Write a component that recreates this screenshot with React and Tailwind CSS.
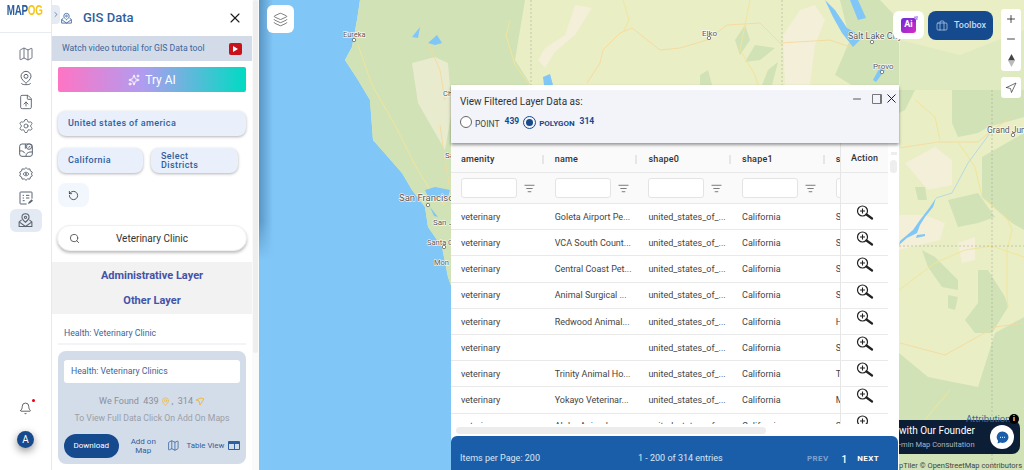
import {
  FileUp,
  Layers,
  Map as MapIcon,
  MapPin,
  Minus,
  Navigation,
  Plus,
  RotateCcw,
  Search,
  Settings,
  Sparkles,
  X,
  Bell,
  ChevronRight,
  Briefcase,
  ListFilter,
} from "lucide-react";

const rows = [
  ["Goleta Airport Pe...", "S"],
  ["VCA South Count...", "S"],
  ["Central Coast Pet...", "S"],
  ["Animal Surgical ...", "S"],
  ["Redwood Animal...", "H"],
  ["", "S"],
  ["Trinity Animal Ho...", "Tr"],
  ["Yokayo Veterinar...", "M"],
  ["Aloha Animal...", "S"],
];

const MagPlus = () => (
  <svg width="18" height="15" viewBox="0 0 18 15" fill="none" stroke="#222">
    <circle cx="6.5" cy="6" r="5" strokeWidth="1.2" />
    <path d="M6.5 3.5v5M4 6h5" strokeWidth="1.1" />
    <path d="M10.5 9.5l5.5 4" strokeWidth="2.2" strokeLinecap="round" />
  </svg>
);

const PinMail = ({ size = 20, color = "#5b6470" }) => (
  <svg width={size} height={size} viewBox="0 0 24 24" fill="none" stroke={color} strokeWidth="1.5">
    <path d="M12 2.5a5 5 0 0 1 5 5c0 3-5 7-5 7s-5-4-5-7a5 5 0 0 1 5-5z" />
    <circle cx="12" cy="7.5" r="1.6" />
    <path d="M6.5 11L3 14v6.5h18V14l-3.5-3" />
    <path d="M3 14l9 6.5L21 14" />
  </svg>
);

const PinRound = () => (
  <svg width="16" height="16" viewBox="0 0 24 24" fill="none" stroke="#5b6470" strokeWidth="1.5">
    <path d="M12 2a7.5 7.5 0 0 1 7.5 7.5c0 4-5 8-7.5 10.5-2.500-2.500-7.500-6.500-7.500-10.500A7.500 7.500 0 0 1 12 2z" />
    <circle cx="12" cy="9.500" r="3" />
    <path d="M6 19.500c-1 .5-1 2.500 6 2.500s7-2 6-2.500" />
  </svg>
);

const MapCheck = () => (
  <svg width="16" height="16" viewBox="0 0 24 24" fill="none" stroke="#5b6470" strokeWidth="1.5">
    <rect x="2.500" y="3" width="19" height="18.500" rx="3.500" />
    <path d="M2.500 13.500c4-1 6 1 8 3.500M11 3v7M12 21.500c0-5 4-7 9.500-6.500" />
    <circle cx="16.500" cy="7" r="4" fill="#fff" />
    <path d="M15 7l1.200 1.200L18.200 6" />
  </svg>
);

const GearEye = () => (
  <svg width="16" height="16" viewBox="0 0 24 24" fill="none" stroke="#5b6470" strokeWidth="1.4">
    <path d="M12 2.500l2.500 2.200 3.300-.4.800 3.200 2.900 1.700-1.300 2.800 1.300 2.800-2.900 1.700-.8 3.200-3.300-.4-2.500 2.200-2.500-2.200-3.300.4-.8-3.200-2.900-1.700 1.300-2.800-1.300-2.800 2.900-1.700.8-3.200 3.300.4z" />
    <path d="M7.500 12c2.500-3.500 6.500-3.500 9 0-2.500 3.500-6.500 3.500-9 0z" />
    <circle cx="12" cy="12" r="1" />
  </svg>
);

const ListEdit = () => (
  <svg width="16" height="16" viewBox="0 0 24 24" fill="none" stroke="#5b6470" strokeWidth="1.5">
    <path d="M13 21H4a1 1 0 0 1-1-1V4a1 1 0 0 1 1-1h16a1 1 0 0 1 1 1v9" />
    <path d="M7 8h2M12 8h5M7 12h2M12 12h5M7 16h3" />
    <path d="M15 21l1-3 4.500-4 2 2-4.500 4z" fill="#5b6470" stroke="none" />
  </svg>
);

const MapArt = () => (
  <svg className="absolute inset-0 w-full h-full" viewBox="259 0 765 470" preserveAspectRatio="none">
    <rect x="259" y="0" width="765" height="470" fill="#80c6f6" />
    {/* land */}
    <path
      d="M360 0L357 20L352 47L345 60L358 80L370 100L373 140L388 157L402 173L412 190L425 207L428 227L442 247L448 277L456 300L470 470L1024 470L1024 0Z"
      fill="#e9eec5"
    />
    <g fill="#d0e2b6">
      <path d="M360 0H525L515 60L531 85L531 300H456L448 277L442 247L428 227L425 207L412 190L402 173L388 157L373 140L370 100L358 80L345 60L352 47L357 20Z" />
      <path d="M840 0L880 0L899 20L899 90L860 90L835 75L850 40Z" />
      <path d="M900 40L960 55L1024 30V90H900Z" opacity="0.35" />
      <path d="M952 90L1024 90V117L988 127L978 133L958 137L952 123Z" />
      <path d="M899 90H915L905 110L899 113Z" />
      <path d="M982 157L1024 133V230L1012 223L982 197Z" />
      <path d="M948 200L978 193L995 217L978 223L958 227Z" />
      <path d="M915 187L925 187L927 200L918 200Z" />
      <path d="M922 250L935 257L958 280L958 290L942 287L928 267Z" />
      <path d="M978 270L988 270L1005 297L1008 307L992 333L975 333L965 320L978 303Z" />
      <path d="M899 353L928 377L978 387L995 333L1024 317V470H899Z" />
      <path d="M948 295L958 297L955 310L948 308Z" />
      <path d="M745 25L750 40L740 55L735 40ZM755 45L775 48L760 60L745 62ZM768 70L778 62L772 85L762 85ZM700 75L708 70L712 85L700 85Z" />
    </g>
    <g fill="#f4efd9">
      <path d="M575 5L592 8L575 35L555 52L545 68L538 60L545 48L565 35Z" />
      <path d="M783 35L800 10L815 5L825 20L815 45L810 85L785 85Z" />
      <path d="M412 63L435 57L448 63L452 110L445 150L418 103Z" opacity="0.7" />
      <path d="M905 163L935 147L952 160L952 185L928 190Z" />
      <path d="M899 215L925 215L945 223L940 240L899 250Z" />
      <path d="M958 243L975 237L975 260L962 263Z" />
    </g>
    {/* roads */}
    <g fill="none" stroke="#f6d99c" strokeWidth="0.9">
      <path d="M587 83L600 63L603 50L620 33L632 28L660 50L680 48L707 40L727 25L760 23L780 43L830 40L850 47" />
      <path d="M899 148L938 142L978 142L992 130L1010 118" />
      <path d="M900 343L945 355L995 327L1024 323" />
      <path d="M440 125L445 160L450 190M428 43L440 70L445 100" />
    </g>
    <g fill="none" stroke="#f2e59a" strokeWidth="1">
      <path d="M358 45L372 85L395 125L415 165L430 190L445 205" />
      <path d="M623 0L629 20L624 30M750 0L745 25L740 50L755 75L758 85" />
      <path d="M510 20L506 35L515 65L530 85" />
      <path d="M915 100L935 117L940 140" />
      <path d="M958 142L975 167L982 197L1008 220L1012 230L1007 250L1007 297L1008 307" />
      <path d="M899 290L935 263L965 250L992 246L1024 257" />
      <path d="M925 420L950 390" />
    </g>
    <path d="M936 198L952 193L968 163L985 140L992 130" fill="none" stroke="#a8d4e8" strokeWidth="0.8" />
    {/* state lines */}
    <path d="M531 0V85M782 0V85M992 90V470M899 246H1024" stroke="#a9ab9c" strokeDasharray="2 2" strokeWidth="0.6" fill="none" />
    {/* water */}
    <g fill="#80c6f6">
      <path d="M412 37L420 27L418 38ZM428 43L437 35L442 43L435 45Z" />
      <path d="M425 190L435 187L450 190L448 197L428 197ZM430 207L438 217L434 216Z" />
      <path d="M543 77L550 74L553 85H544Z" />
      <path d="M825 0L835 10L847 28L863 37L853 47L842 33L833 17Z" />
      <path d="M850 0H858L866 18L858 20Z" />
      <path d="M873 80L880 67L885 70L876 82Z" />
      <path d="M936 198L933 207L925 217L920 225L917 233L907 238L899 245L900 241L913 230L920 220L930 207Z" />
      <path d="M917 235L925 234L925 236L916 238Z" />
    </g>
    <g fontFamily="Roboto, sans-serif" fill="#555" stroke="#fff" strokeWidth="1.200" paintOrder="stroke">
      <text x="343" y="37" fontSize="7.500">Eureka</text>
      <text x="702" y="36" fontSize="8">Elko</text>
      <text x="848" y="39" fontSize="9">Salt Lake City</text>
      <text x="873" y="69" fontSize="8">Provo</text>
      <text x="987" y="133" fontSize="8.500">Grand Junction</text>
      <text x="399" y="201" fontSize="9.500">San Francisco</text>
      <text x="433" y="225" fontSize="8">San J</text>
      <text x="427" y="245" fontSize="7.500">Santa C</text>
      <text x="434" y="265" fontSize="7.500">Mon</text>
      <text x="443" y="96" fontSize="7.500">Ch</text>
      <text x="445" y="158" fontSize="8">Sa</text>
    </g>
    <g fill="#fff" stroke="#666" strokeWidth="0.8">
      <circle cx="354" cy="40" r="1.700" />
      <circle cx="709" cy="38" r="1.700" />
      <circle cx="872" cy="42" r="1.700" />
      <circle cx="882" cy="72" r="1.700" />
      <circle cx="1013" cy="135" r="1.700" />
      <circle cx="428" cy="205" r="1.700" />
      <circle cx="444" cy="247" r="1.700" />
    </g>
  </svg>
);

const Rail = () => (
  <div className="w-[52px] h-full shrink-0 flex flex-col items-center border-r border-[#e6e9ee] bg-white">
    <div className="h-[33px] w-full border-b border-[#e8ebef] flex justify-center pt-[1px]">
      <span className="font-['Liberation_Sans',sans-serif] font-bold text-[14px] leading-[18px] tracking-[-0.3px] text-[#2c5e9e] scale-x-[0.7] mr-[1px]">
        MAP<span className="text-[#f5c518]">OG</span>
      </span>
    </div>
    <div className="flex flex-col items-center gap-[8px] mt-[13px] text-[#5b6470]">
      <MapIcon size={16} strokeWidth={1.3} />
      <PinRound />
      <FileUp size={16} strokeWidth={1.4} />
      <Settings size={16} strokeWidth={1.3} />
      <MapCheck />
      <GearEye />
      <ListEdit />
      <div className="w-[32px] h-[23px] -mt-[5px] rounded-md bg-[#e3eaf3] flex items-center justify-center">
        <PinMail size={17} />
      </div>
    </div>
    <div className="mt-auto mb-[22px] flex flex-col items-center gap-[16px]">
      <div className="relative">
        <Bell size={13} strokeWidth={1.4} className="text-[#333]" />
        <span className="absolute -top-[3px] right-[-3px] w-[3px] h-[3px] rounded-full bg-red-600" />
      </div>
      <div className="w-[17px] h-[17px] rounded-full bg-[#164a8e] text-white text-[10px] flex items-center justify-center shadow-[0_3px_8px_rgba(0,0,0,0.45)]">
        A
      </div>
    </div>
  </div>
);

const Panel = () => (
  <div className="relative w-[207px] h-full shrink-0 flex bg-white">
    <div className="w-[200px] h-full shrink-0 flex flex-col">
      <div className="h-[36px] shrink-0 flex items-center">
        <div className="w-[8px] h-[19px] -mt-[7px] bg-[#e6ebf3] rounded-r-sm flex items-center justify-center">
          <ChevronRight size={9} className="text-[#2f5f9e]" />
        </div>
        <div>
          <PinMail size={13} color="#2f5f9e" />
        </div>
        <span className="ml-[10px] text-[13px] font-medium text-[#2f5f9e]">GIS Data</span>
        <X size={16} strokeWidth={1.7} className="ml-auto mr-[9px] -mt-[1px] text-[#1c1c1c]" />
      </div>
      <div className="h-[25px] shrink-0 bg-[#d3dbe8] flex items-center pl-[10px] pr-[10px] text-[8.7px] text-[#3c659c] whitespace-nowrap">
        Watch video tutorial for GIS Data tool
        <span className="ml-auto w-[13px] h-[12px] rounded-[2px] bg-[#c8111a] flex items-center justify-center">
          <span className="w-0 h-0 border-y-[3px] border-y-transparent border-l-[5px] border-l-white" />
        </span>
      </div>
      <div className="mx-[6px] mt-[6px] h-[25px] rounded-[2px] bg-[linear-gradient(90deg,#ff74c4_0%,#b09cf0_45%,#00dbc2_100%)] text-white flex items-center justify-center gap-[5px] text-[12px] shrink-0">
        <Sparkles size={12} />
        Try AI
      </div>
      <div className="mx-[6px] mt-[19px] h-[25px] rounded-lg bg-[#e9effb] shadow-[0_1px_3px_rgba(0,0,0,0.3)] flex items-center pl-[10px] text-[9px] font-medium tracking-[0.4px] text-[#2f5f9e] shrink-0">
        United states of america
      </div>
      <div className="flex mx-[6px] mt-[12px] gap-[8px] shrink-0">
        <div className="w-[85px] h-[25px] rounded-lg bg-[#e9effb] shadow-[0_1px_3px_rgba(0,0,0,0.3)] flex items-center pl-[10px] text-[9px] font-medium tracking-[0.4px] text-[#2f5f9e]">
          California
        </div>
        <div className="w-[87px] h-[25px] rounded-lg bg-[#e9effb] shadow-[0_1px_3px_rgba(0,0,0,0.3)] flex items-center pl-[10px] text-[9px] leading-[8.5px] font-medium tracking-[0.4px] text-[#2f5f9e]">
          Select
          <br />
          Districts
        </div>
      </div>
      <div className="mx-[6px] mt-[10px] w-[31px] h-[24px] rounded-lg bg-[#f2f6fd] flex items-center justify-center shrink-0">
        <RotateCcw size={11} strokeWidth={1.6} className="text-[#222]" />
      </div>
      <div className="relative mx-[5px] mt-[18px] h-[26px] rounded-full bg-white border border-[#f0f0f0] shadow-[0_2px_3px_rgba(0,0,0,0.25)] flex items-center justify-center text-[10px] text-[#333] shrink-0">
        <Search size={11} className="absolute left-[11px] text-[#555]" />
        Veterinary Clinic
      </div>
      <div className="mt-[11px] h-[52px] pt-[2px] bg-[#f2f2f2] flex flex-col items-center justify-around text-[11px] font-bold text-[#4453a8] shrink-0">
        <span>Administrative Layer</span>
        <span>Other Layer</span>
      </div>
      <div className="mx-[6px] h-[31px] border-b-2 border-[#f2f4f7] flex items-center pl-[6px] pt-[10px] text-[8.7px] text-[#3c659c] shrink-0">
        Health: Veterinary Clinic
      </div>
      <div className="mx-[6px] mt-[6px] h-[113px] rounded-lg bg-[#d3dce9] px-[6px] pt-[9px] shrink-0">
        <div className="h-[23px] bg-white rounded-[3px] flex items-center pl-[7px] text-[8.7px] text-[#3c659c]">
          Health: Veterinary Clinics
        </div>
        <div className="mt-[12px] flex items-center justify-center gap-[2px] text-[9px] font-normal text-[#8a8f99]">
          We Found &nbsp;439
          <MapPin size={9} className="text-[#e9b949]" />,&nbsp; 314
          <svg width="10" height="9" viewBox="0 0 10 9" fill="none" stroke="#e9b949" strokeWidth="1">
            <path d="M1 3L6 1L9 2L7 5L5 8L4 4Z" />
          </svg>
        </div>
        <div className="mt-[3px] text-center text-[8.7px] text-[#9a9fa8] whitespace-nowrap">
          To View Full Data Click On Add On Maps
        </div>
        <div className="mt-[9px] flex items-center">
          <div className="w-[56px] h-[24px] rounded-full bg-[#164a8e] text-white text-[8px] flex items-center justify-center">
            Download
          </div>
          <div className="ml-[11px] w-[28px] text-center text-[8px] leading-[9px] text-[#2f5f9e]">
            Add on
            <br />
            Map
          </div>
          <MapIcon size={13} strokeWidth={1.4} className="ml-[10px] text-[#2f5f9e]" />
          <span className="ml-[7px] text-[7.8px] text-[#2f5f9e] whitespace-nowrap">Table View</span>
          <div className="ml-[4px] w-[12px] h-[9px] rounded-[1px] bg-[#2f5f9e] grid grid-cols-2 gap-[1px] p-[1px] pt-[3px]">
            <span className="bg-[#d3dce9]" />
            <span className="bg-[#d3dce9]" />
          </div>
        </div>
      </div>
    </div>
    <div className="w-[7px] h-full bg-[#fafafa] px-[1px]">
      <div className="h-[353px] bg-[#eeeeee] rounded-full" />
    </div>
  </div>
);

const LayerWindow = () => (
  <div className="absolute left-[192px] top-[85px] w-[448px] h-[385px] flex flex-col bg-white">
    <div className="relative h-[58px] shrink-0 border-t-[5px] border-white bg-[#f2f4f9] shadow-[0_2px_3px_rgba(0,0,0,0.4)] z-10 pl-[9px] pt-[5px]">
      <div className="text-[10px] leading-[13px] text-[#333]">View Filtered Layer Data as:</div>
      <div className="flex items-start mt-[8px]">
        <span className="w-[12px] h-[12px] rounded-full border border-[#666] bg-white" />
        <span className="ml-[3px] mt-[2px] text-[8.5px] text-[#444]">POINT</span>
        <span className="ml-[5px] -mt-[1px] text-[8.5px] font-bold text-[#164a8e]">439</span>
        <span className="ml-[4px] w-[13px] h-[13px] rounded-full border border-[#164a8e] flex items-center justify-center">
          <span className="w-[7px] h-[7px] rounded-full bg-[#164a8e]" />
        </span>
        <span className="ml-[3px] mt-[2px] text-[8px] font-bold text-[#164a8e]">POLYGON</span>
        <span className="ml-[5px] -mt-[1px] text-[8.5px] font-bold text-[#164a8e]">314</span>
      </div>
      <div className="absolute right-[0px] top-[1px] flex items-center text-[#222]">
        <Minus size={12} strokeWidth={1.5} />
        <span className="ml-[9px] w-[10px] h-[10px] border border-[#777] border-r-[2px] rounded-[1px]" />
        <X size={15} strokeWidth={1.6} className="ml-[2px]" />
      </div>
    </div>
    <div className="flex-1 flex min-h-0">
      <div className="w-[390px] shrink-0 h-[281px] overflow-hidden border-r border-[#e6e6e6]">
        <div className="grid grid-cols-[93.7px_93.7px_93.7px_93.7px_93.7px] h-[30px] pt-[3px] bg-[#fafafa] border-b border-[#e8e8e8] items-center text-[9px] font-medium text-[#333] tracking-[0.2px]">
          {["amenity", "name", "shape0", "shape1", "sl"].map((h) => (
            <div key={h} className="pl-[10px] h-[9px] leading-[9px] border-r-2 border-[#e6e6e6] mr-[1px]">
              {h}
            </div>
          ))}
        </div>
        <div className="grid grid-cols-[93.7px_93.7px_93.7px_93.7px_93.7px] h-[31px] bg-[#fafafa] border-b border-[#e8e8e8] items-center">
          {[0, 1, 2, 3, 4].map((i) => (
            <div key={i} className="pl-[10px] flex items-center">
              <span className="w-[56px] h-[20px] bg-white border border-[#e4e4e4] rounded-[3px] shrink-0" />
              <ListFilter size={11} strokeWidth={1.5} className="ml-[7px] text-[#444] shrink-0" />
            </div>
          ))}
        </div>
        {rows.map((r, i) => (
          <div
            key={i}
            className="grid grid-cols-[93.7px_93.7px_93.7px_93.7px_93.7px] h-[26.2px] pt-[2px] border-b border-[#e9e9e9] items-center text-[9px] text-[#444]"
          >
            <div className="pl-[10px]">veterinary</div>
            <div className="pl-[10px] whitespace-nowrap">{r[0]}</div>
            <div className="pl-[10px] whitespace-nowrap">united_states_of_...</div>
            <div className="pl-[10px]">California</div>
            <div className="pl-[10px]">{r[1]}</div>
          </div>
        ))}
      </div>
      <div className="w-[47px] h-[281px] shrink-0 overflow-hidden">
        <div className="h-[30px] pt-[3px] bg-[#fafafa] border-b border-[#e8e8e8] flex items-center pl-[10px] text-[9px] font-medium text-[#333] tracking-[0.2px]">
          Action
        </div>
        <div className="h-[31px] bg-[#fafafa] border-b border-[#e8e8e8]" />
        {rows.map((_, i) => (
          <div key={i} className="h-[26.2px] border-b border-[#e9e9e9] flex justify-center pt-[1px]">
            <MagPlus />
          </div>
        ))}
      </div>
      <div className="flex-1 pt-[9px] px-[1px]">
        <div className="h-[3px] w-[6px] mx-auto bg-[#eee]" />
        <div className="h-[13px] w-[7px] mx-auto mt-[5px] rounded-full bg-[#eeeeee]" />
      </div>
    </div>
    <div className="absolute left-[5px] top-[342px] w-[310px] h-[7px] rounded-full bg-[#ececec]" />
    <div className="h-[34px] shrink-0 mr-[1px] rounded-t-md bg-[#1a5ea9] text-white flex items-center text-[9px] pl-[9px] pr-[19px] pt-[12px] relative z-10">
      <span className="text-[#dbe7f5]">Items per Page: 200</span>
      <span className="ml-[98px] text-[#dbe7f5]">1 - 200 of 314 entries</span>
      <span className="ml-auto text-[8px] font-bold tracking-[0.4px] text-[#7fa3cf]">PREV</span>
      <span className="ml-[13px] text-[10px] font-medium">1</span>
      <span className="ml-[10px] text-[8px] font-bold tracking-[0.4px]">NEXT</span>
    </div>
  </div>
);

const App = () => (
  <div className="flex w-[1024px] h-[470px] overflow-hidden bg-white font-['Roboto',sans-serif]">
    <Rail />
    <Panel />
    <div className="relative flex-1 h-full overflow-hidden">
      <MapArt />
      <div className="absolute left-0 top-0 w-[14px] h-[260px] bg-gradient-to-r from-[#3f76a6]/60 to-transparent [mask-image:linear-gradient(180deg,#000_85%,transparent)]" />

      <div className="absolute left-[8px] top-[5px] w-[27px] h-[28px] rounded-md bg-white flex items-center justify-center">
        <Layers size={15} strokeWidth={1.2} className="text-[#555]" />
      </div>

      <div className="absolute left-[634px] top-[11px] w-[31px] h-[28px] rounded-md bg-white flex items-center justify-center">
        <div className="relative w-[15px] h-[15px] rounded-[3px] bg-[linear-gradient(135deg,#6b2bd8,#d92bc4)] text-white text-[9px] font-bold flex items-center justify-center">
          Ai
          <Sparkles size={6} className="absolute -top-[2px] -right-[2px] text-[#6b2bd8]" />
        </div>
      </div>
      <div className="absolute left-[669px] top-[11px] w-[65px] h-[29px] rounded-lg bg-[#164a8e] text-[#c9d8ec] flex items-center gap-[6px] pl-[8px] text-[9px] font-medium">
        <Briefcase size={12} strokeWidth={1.3} />
        Toolbox
      </div>
      <div className="absolute left-[742px] top-[9px] w-[20px] h-[62px] rounded-[3px] bg-white flex flex-col items-center justify-around text-[#333]">
        <Plus size={12} strokeWidth={1.8} />
        <Minus size={12} strokeWidth={1.8} />
        <svg width="7" height="13" viewBox="0 0 7 13">
          <path d="M3.500 0L7 6.500H0Z" fill="#444" />
          <path d="M3.500 13L7 6.500H0Z" fill="#bbb" />
        </svg>
      </div>
      <div className="absolute left-[742px] top-[77px] w-[20px] h-[21px] rounded-[3px] bg-white flex items-center justify-center">
        <Navigation size={12} strokeWidth={1.4} className="text-[#333]" />
      </div>

      <LayerWindow />

      <div className="absolute left-[640px] top-[420px] w-[121px] h-[34px] rounded-r-lg bg-[#0c1d36] text-white flex items-center overflow-hidden">
        <div className="whitespace-nowrap">
          <div className="text-[10px] leading-[13px]">with Our Founder</div>
          <div className="text-[7.5px] leading-[11px] text-[#a8b4c4] mt-[2px]">-min Map Consultation</div>
        </div>
        <div className="ml-auto mr-[6px] w-[24px] h-[24px] rounded-full bg-white flex items-center justify-center">
          <svg width="13" height="13" viewBox="0 0 13 13">
            <path d="M6.500 .5a6 5.700 0 0 1 0 11.400c-.8 0-1.500-.1-2.200-.3L1.500 12.500l.6-2.600A5.700 5.700 0 0 1 6.500 .5z" fill="#1a5ea9" />
            <path d="M4 6.300h5" stroke="#fff" strokeWidth="1" strokeDasharray="1 1" />
          </svg>
        </div>
      </div>
      <span className="absolute left-[707px] top-[413px] text-[9.5px] leading-[11px] text-[#3c659c]">Attribution</span>
      <span className="absolute left-[750px] top-[414px] w-[10px] h-[10px] rounded-full bg-black text-white text-[7px] leading-[10px] text-center font-bold">
        i
      </span>
      <span className="absolute left-[640px] top-[461px] text-[7.5px] leading-[10px] text-[#444] whitespace-nowrap">
        pTiler © OpenStreetMap contributors
      </span>
    </div>
  </div>
);

export default App;
